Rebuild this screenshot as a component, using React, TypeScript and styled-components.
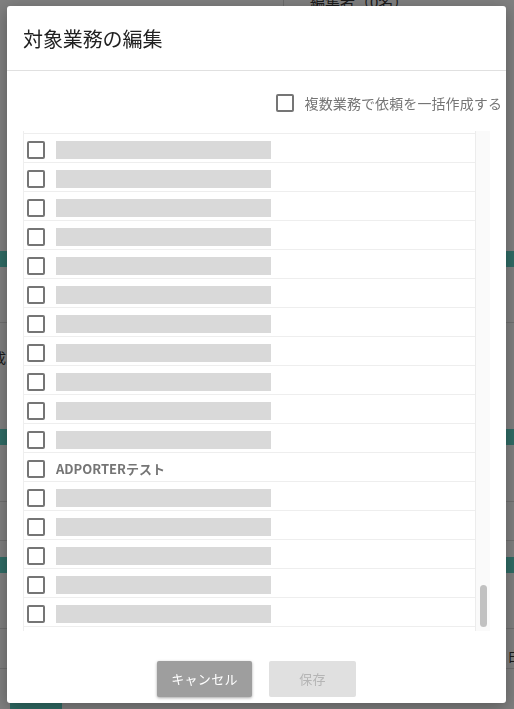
import { useLayoutEffect, useRef } from 'react';
import styled, { createGlobalStyle } from 'styled-components';

const FONT = `"Noto Sans CJK JP", "Noto Sans", sans-serif`;

const GlobalStyle = createGlobalStyle`
  html, body {
    margin: 0;
    padding: 0;
    height: 100%;
    overflow: hidden;
    font-family: ${FONT};
    background: #ffffff;
  }
  * {
    box-sizing: border-box;
  }
`;

/* ---------- page behind the dialog ---------- */

const Page = styled.div`
  width: 100%;
  height: 100vh;
  display: flex;
  flex-direction: column;
  background: #ffffff;
`;

const PageTop = styled.div`
  height: 251px;
  display: flex;
  align-items: flex-start;
`;

const PageTopLeft = styled.div`
  width: 284px;
  height: 40px;
  border-right: 1px solid #d8d8d8;
`;

const PageTopTitle = styled.div`
  margin-top: -9px;
  padding-left: 26px;
  font-size: 15px;
  color: #333333;
`;

const Band = styled.div<{ $h: number; $teal?: boolean; $line?: boolean; $top?: number }>`
  height: ${(p) => p.$h}px;
  flex-shrink: 0;
  padding-top: ${(p) => p.$top ?? 0}px;
  background: ${(p) => (p.$teal ? '#5fd6c9' : '#ffffff')};
  border-bottom: ${(p) => (p.$line ? '1px solid #dedede' : 'none')};
  display: flex;
  align-items: flex-start;
  justify-content: space-between;
  overflow: hidden;
  font-size: 14px;
  line-height: 20px;
  color: #333333;
`;

const CutText = styled.span<{ $side: 'left' | 'right' }>`
  margin-${(p) => p.$side}: -8px;
`;

const PageBottom = styled.div`
  flex: 1;
  padding-left: 10px;
`;

const TealTab = styled.div`
  width: 52px;
  height: 100%;
  background: #5fd6c9;
`;

const Dim = styled.div`
  position: fixed;
  inset: 0;
  background: rgba(0, 0, 0, 0.5);
`;

/* ---------- dialog ---------- */

const Dialog = styled.section`
  position: fixed;
  top: 6px;
  left: 7px;
  width: 499px;
  height: 697px;
  background: #ffffff;
  border-radius: 3px;
  box-shadow: 0 4px 16px rgba(0, 0, 0, 0.3);
  display: flex;
  flex-direction: column;
`;

const DialogHeader = styled.header`
  height: 65px;
  flex-shrink: 0;
  padding: 0 16px;
  display: flex;
  align-items: center;
  border-bottom: 1px solid #e0e0e0;
`;

const DialogTitle = styled.h2`
  margin: 0;
  font-size: 20px;
  font-weight: 400;
  color: #212121;
  letter-spacing: -0.1px;
`;

const OptionRow = styled.label`
  margin-top: 20px;
  height: 24px;
  padding-right: 4px;
  display: flex;
  align-items: center;
  justify-content: flex-end;
  gap: 11px;
  font-size: 14px;
  letter-spacing: 0.1px;
  color: #757575;
  white-space: nowrap;
`;

const Box = styled.span`
  width: 18px;
  height: 18px;
  flex-shrink: 0;
  border: 2px solid #757575;
  border-radius: 2px;
  background: #ffffff;
`;

const ListPanel = styled.div`
  margin: 16px 16px 0;
  height: 500px;
  display: flex;
  border-left: 1px solid #eeeeee;
`;

const ListViewport = styled.div`
  flex: 1;
  overflow: hidden;
`;

const ScrollTrack = styled.div`
  width: 15px;
  flex-shrink: 0;
  padding: 4px 3px 4px 4px;
  background: #fafafa;
  border-left: 1px solid #ececec;
  display: flex;
  flex-direction: column;
  justify-content: flex-end;
`;

const ScrollThumb = styled.div`
  height: 42px;
  border-radius: 4px;
  background: #c1c1c1;
`;

const List = styled.ul`
  margin: 0;
  padding: 0 0 4px;
  list-style: none;
`;

const Row = styled.li`
  height: 29px;
  padding: 3px 0 0 3px;
  display: flex;
  align-items: center;
  gap: 11px;
  border-bottom: 1px solid #eeeeee;
`;

const RowName = styled.span`
  font-size: 13px;
  font-weight: 700;
  color: #757575;
`;

const Redacted = styled.span`
  width: 215px;
  height: 18px;
  background: #d9d9d9;
`;

const Footer = styled.footer`
  margin-top: 30px;
  display: flex;
  justify-content: center;
  gap: 17px;
`;

const Button = styled.button<{ $primary?: boolean }>`
  height: 36px;
  padding: 0 0 2px;
  border: 0;
  border-radius: 2px;
  font-family: ${FONT};
  font-size: 13px;
  letter-spacing: 0.3px;
  background: ${(p) => (p.$primary ? '#9e9e9e' : '#e0e0e0')};
  color: ${(p) => (p.$primary ? '#ffffff' : '#b5b5b5')};
  box-shadow: ${(p) => (p.$primary ? '0 1px 3px rgba(0,0,0,0.35)' : 'none')};
  width: ${(p) => (p.$primary ? '95px' : '87px')};
`;

const TOTAL = 172;
const rows = Array.from({ length: TOTAL }, (_, i) =>
  i === TOTAL - 6 ? 'ADPORTERテスト' : null,
);

export default function App() {
  const scrollRef = useRef<HTMLDivElement>(null);

  useLayoutEffect(() => {
    const el = scrollRef.current;
    if (el) el.scrollTop = el.scrollHeight;
  }, []);

  return (
    <>
      <GlobalStyle />
      <Page>
        <PageTop>
          <PageTopLeft />
          <PageTopTitle>編集者（0名）</PageTopTitle>
        </PageTop>
        <Band $h={16} $teal />
        <Band $h={56} $line />
        <Band $h={106} $top={24}>
          <CutText $side="left">成</CutText>
        </Band>
        <Band $h={16} $teal />
        <Band $h={57} $line />
        <Band $h={39} $line />
        <Band $h={16} />
        <Band $h={16} $teal />
        <Band $h={56} $line />
        <Band $h={40} $line $top={16}>
          <span />
          <CutText $side="right">由</CutText>
        </Band>
        <Band $h={34} />
        <PageBottom>
          <TealTab />
        </PageBottom>
      </Page>
      <Dim />
      <Dialog>
        <DialogHeader>
          <DialogTitle>対象業務の編集</DialogTitle>
        </DialogHeader>
        <OptionRow>
          <Box />
          複数業務で依頼を一括作成する
        </OptionRow>
        <ListPanel>
          <ListViewport ref={scrollRef}>
            <List>
              {rows.map((name, i) => (
                <Row key={i}>
                  <Box />
                  {name ? <RowName>{name}</RowName> : <Redacted />}
                </Row>
              ))}
            </List>
          </ListViewport>
          <ScrollTrack>
            <ScrollThumb />
          </ScrollTrack>
        </ListPanel>
        <Footer>
          <Button $primary>キャンセル</Button>
          <Button disabled>保存</Button>
        </Footer>
      </Dialog>
    </>
  );
}
